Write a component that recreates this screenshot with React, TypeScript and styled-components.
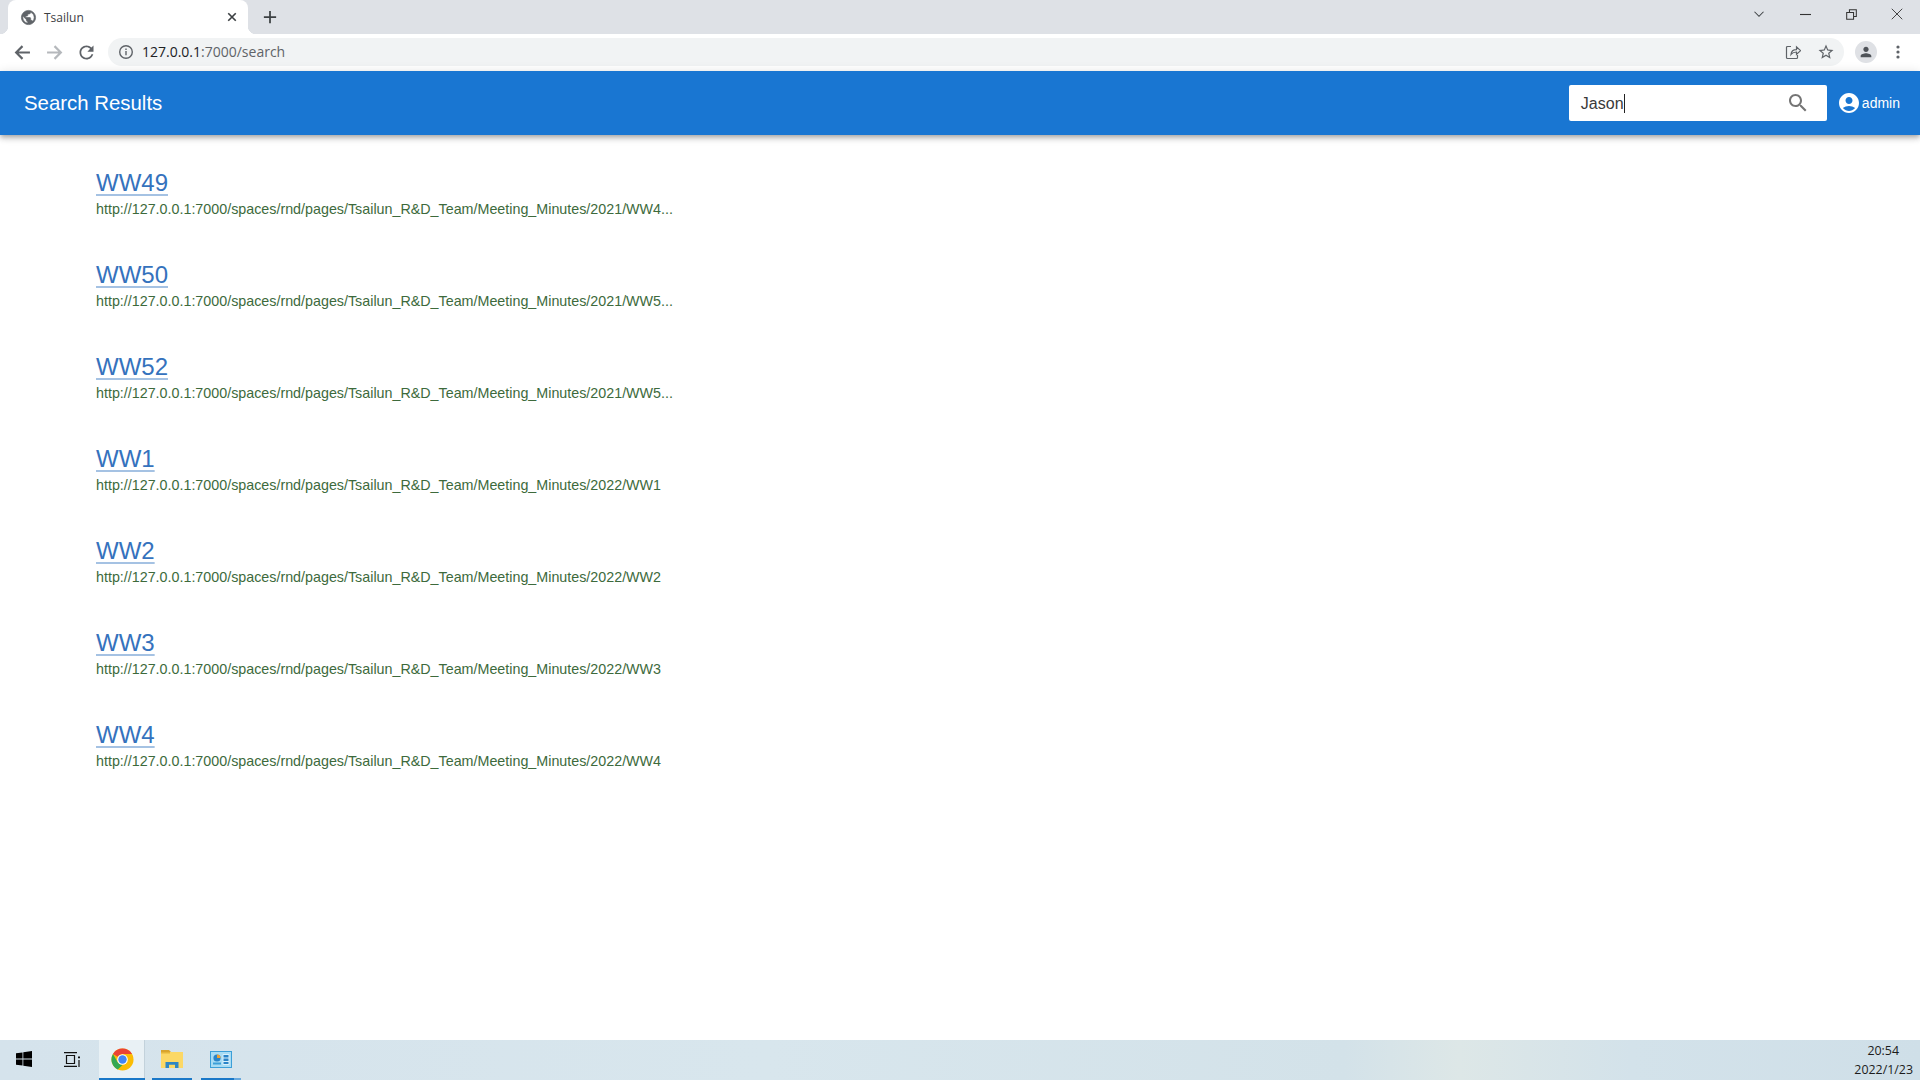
import React from "react"
import styled, { createGlobalStyle } from "styled-components"

const Global = createGlobalStyle`
    html, body, #root {
        margin: 0;
        padding: 0;
        height: 100%;
        background: #fff;
    }
    body {
        font-family: "Liberation Sans", Arial, sans-serif;
        overflow: hidden;
    }
`

const Shell = styled.div`
    width: 1920px;
    height: 1080px;
    display: flex;
    flex-direction: column;
    overflow: hidden;
`

const TabStrip = styled.div`
    height: 34px;
    flex: none;
    background: #dee1e6;
    display: flex;
    align-items: flex-end;
    padding-left: 8px;
`

const Tab = styled.div`
    position: relative;
    width: 240px;
    height: 34px;
    box-sizing: border-box;
    background: #fff;
    border-radius: 8px 8px 0 0;
    display: flex;
    align-items: center;
    padding: 0 10px 0 12px;
    gap: 7px;
    &::before,
    &::after {
        content: "";
        position: absolute;
        bottom: 0;
        width: 8px;
        height: 8px;
    }
    &::before {
        left: -8px;
        background: radial-gradient(circle at 0 0, #dee1e6 8px, #fff 8.5px);
    }
    &::after {
        right: -8px;
        background: radial-gradient(circle at 100% 0, #dee1e6 8px, #fff 8.5px);
    }
`

const TabTitle = styled.span`
    flex: 1;
    font-family: "Open Sans", sans-serif;
    font-size: 12px;
    color: #3c4043;
`

const NewTab = styled.div`
    width: 44px;
    height: 34px;
    display: flex;
    align-items: center;
    justify-content: center;
`

const WindowControls = styled.div`
    margin-left: auto;
    height: 34px;
    display: flex;
    align-items: center;
`

const WindowButton = styled.div`
    width: 46px;
    height: 28px;
    margin-bottom: 6px;
    display: flex;
    align-items: center;
    justify-content: center;
`

const Toolbar = styled.div`
    height: 37px;
    flex: none;
    box-sizing: border-box;
    background: #fff;
    display: flex;
    align-items: center;
    padding: 0 6px 1px 7px;
`

const NavButton = styled.div`
    width: 32px;
    height: 28px;
    display: flex;
    align-items: center;
    justify-content: center;
`

const Omnibox = styled.div`
    width: 1737px;
    height: 28px;
    margin-left: 5px;
    box-sizing: border-box;
    background: #f1f3f4;
    border-radius: 14px;
    display: flex;
    align-items: center;
    padding: 0 2px 0 10px;
`

const UrlText = styled.div`
    flex: 1;
    margin: 0 0 2px 8px;
    font-family: "Open Sans", sans-serif;
    font-size: 14px;
    color: #5f6368;
`

const UrlHost = styled.span`
    color: #202124;
`

const OmniAction = styled.div`
    width: 33px;
    height: 28px;
    display: flex;
    align-items: center;
    justify-content: center;
`

const Avatar = styled.div`
    width: 22px;
    height: 22px;
    margin-left: 11px;
    border-radius: 50%;
    background: #dfe1e5;
    display: flex;
    align-items: center;
    justify-content: center;
`

const MenuDots = styled.div`
    width: 32px;
    display: flex;
    align-items: center;
    justify-content: center;
    margin-left: 5px;
`

const AppBar = styled.header`
    height: 64px;
    flex: none;
    position: relative;
    z-index: 1;
    background: #1976d2;
    box-shadow: 0 2px 4px -1px rgba(0, 0, 0, 0.2), 0 4px 5px 0 rgba(0, 0, 0, 0.14), 0 1px 10px 0 rgba(0, 0, 0, 0.12);
    color: #fff;
    display: flex;
    align-items: center;
    padding: 0 20px 0 24px;
`

const AppTitle = styled.h1`
    margin: 0;
    font-size: 20.4px;
    font-weight: 400;
    flex: 1;
`

const SearchBox = styled.div`
    width: 258px;
    height: 36px;
    box-sizing: border-box;
    background: #fff;
    border-radius: 2px;
    display: flex;
    align-items: center;
    padding: 0 17px 0 12px;
    color: #3a3a3a;
    font-size: 16px;
`

const SearchValue = styled.span`
    flex: 1;
`

const Caret = styled.span`
    display: inline-block;
    width: 1px;
    height: 19px;
    background: #222;
    vertical-align: -4px;
`

const UserMenu = styled.div`
    margin-left: 10px;
    display: flex;
    align-items: center;
    gap: 1px;
    font-size: 14px;
`

const Results = styled.main`
    flex: 1;
    padding: 31px 0 0 96px;
`

const ResultItem = styled.div`
    height: 92px;
`

const ResultLink = styled.a`
    display: inline-block;
    font-size: 24px;
    line-height: 34px;
    color: #3572bd;
    text-decoration: underline;
    text-decoration-color: #a5c2e3;
    text-decoration-thickness: 2px;
    text-underline-offset: 3px;
`

const ResultUrl = styled.div`
    margin-top: -1px;
    font-size: 14.3px;
    line-height: 20px;
    color: #3d6a3c;
`

const Taskbar = styled.footer`
    height: 40px;
    flex: none;
    background: linear-gradient(90deg, #d5e3ec 0%, #d8e6ed 40%, #d3e2e9 70%, #dde7e7 76%, #d3e2ea 85%, #cfdfe8 100%);
    display: flex;
    align-items: stretch;
`

const TaskSlot = styled.div<{ $width: number; $state?: "active" | "open" | "tail" }>`
    width: ${(p) => p.$width}px;
    flex: none;
    box-sizing: border-box;
    display: flex;
    align-items: center;
    justify-content: center;
    background: ${(p) => (p.$state === "active" ? "#e9f1f5" : "transparent")};
    border-bottom: 2px solid ${(p) => (p.$state ? "#1a78c8" : "transparent")};
    ${(p) => (p.$state === "active" ? "box-shadow: inset -1px 0 0 #c3d2db;" : "")}
    ${(p) => (p.$state === "tail" ? "border-image: linear-gradient(90deg, #1a78c8 80%, #68a9de 80%) 1;" : "")}
`

const Clock = styled.div`
    margin-left: auto;
    padding-right: 7px;
    display: flex;
    flex-direction: column;
    align-items: flex-end;
    justify-content: center;
    font-family: "Open Sans", sans-serif;
    font-size: 12.4px;
    line-height: 19px;
    color: #1c1c1c;
`

const ClockTime = styled.span`
    padding-right: 14px;
`

const results = [
    { title: "WW49", url: "http://127.0.0.1:7000/spaces/rnd/pages/Tsailun_R&D_Team/Meeting_Minutes/2021/WW4..." },
    { title: "WW50", url: "http://127.0.0.1:7000/spaces/rnd/pages/Tsailun_R&D_Team/Meeting_Minutes/2021/WW5..." },
    { title: "WW52", url: "http://127.0.0.1:7000/spaces/rnd/pages/Tsailun_R&D_Team/Meeting_Minutes/2021/WW5..." },
    { title: "WW1", url: "http://127.0.0.1:7000/spaces/rnd/pages/Tsailun_R&D_Team/Meeting_Minutes/2022/WW1" },
    { title: "WW2", url: "http://127.0.0.1:7000/spaces/rnd/pages/Tsailun_R&D_Team/Meeting_Minutes/2022/WW2" },
    { title: "WW3", url: "http://127.0.0.1:7000/spaces/rnd/pages/Tsailun_R&D_Team/Meeting_Minutes/2022/WW3" },
    { title: "WW4", url: "http://127.0.0.1:7000/spaces/rnd/pages/Tsailun_R&D_Team/Meeting_Minutes/2022/WW4" },
]

const Globe = () => (
    <svg width="17" height="17" viewBox="0 0 24 24" fill="#5f6368" stroke="#5f6368" strokeWidth="0.9">
        <path d="M12 2C6.48 2 2 6.48 2 12s4.48 10 10 10 10-4.48 10-10S17.52 2 12 2zm-1 17.93c-3.95-.49-7-3.85-7-7.93 0-.62.08-1.21.21-1.79L9 15v1c0 1.1.9 2 2 2v1.93zm6.9-2.54c-.26-.81-1-1.39-1.9-1.39h-1v-3c0-.55-.45-1-1-1H8v-2h2c.55 0 1-.45 1-1V7h2c1.1 0 2-.9 2-2v-.41c2.93 1.19 5 4.06 5 7.41 0 2.08-.8 3.97-2.1 5.39z" />
    </svg>
)

const Line = ({ d, color = "#5f6368", size = 16, box = 16, width = 2 }: { d: string; color?: string; size?: number; box?: number; width?: number }) => (
    <svg width={size} height={size} viewBox={`0 0 ${box} ${box}`} fill="none" stroke={color} strokeWidth={width}>
        <path d={d} />
    </svg>
)

const ChromeLogo = () => (
    <svg width="23" height="23" viewBox="0 0 48 48">
        <circle cx="24" cy="24" r="23" fill="#fbbc04" />
        <path d="M24 1a23 23 0 0 1 19.9 11.5H24a11.5 11.5 0 0 0-10 5.8L4.1 12.5A23 23 0 0 1 24 1z" fill="#ea4335" />
        <path d="M4.1 12.5 14 29.8a11.5 11.5 0 0 0 10 5.7l-9.9 9.2A23 23 0 0 1 4.1 12.5z" fill="#34a853" />
        <circle cx="24" cy="24" r="11" fill="#fff" />
        <circle cx="24" cy="24" r="8.8" fill="#4285f4" />
    </svg>
)

const FolderIcon = () => (
    <svg width="22" height="20" viewBox="0 0 22 20">
        <path d="M0 1h8l2 2H0z" fill="#d9a52e" />
        <rect x="0" y="3" width="22" height="16" fill="#fcd866" />
        <rect x="0" y="3" width="9" height="1.5" fill="#e6b63a" />
        <path d="M4.500 19v-6h13v6h-3.500v-3.200h-6V19z" fill="#2f86c4" />
    </svg>
)

const PanelIcon = () => (
    <svg width="22" height="17" viewBox="0 0 22 17">
        <rect x="0.500" y="0.500" width="21" height="16" fill="#a8dcf4" stroke="#3c9fd8" />
        <circle cx="7" cy="7" r="3.600" fill="#2a84c8" />
        <path d="M7 7V3.400A3.600 3.600 0 0 1 10.600 7z" fill="#f0a030" />
        <rect x="3" y="11.500" width="8" height="2" fill="#3c9fd8" />
        <path d="M13 3.500h6v10h-6zM13 7h6M13 10.500h6" fill="#2a84c8" stroke="#d8f0fb" strokeWidth="1" />
    </svg>
)

export default function App() {
    return (
        <Shell>
            <Global />
            <TabStrip>
                <Tab>
                    <Globe />
                    <TabTitle>Tsailun</TabTitle>
                    <Line d="M3 3l10 10M13 3L3 13" color="#3c4043" size={12} width={2.2} />
                </Tab>
                <NewTab>
                    <Line d="M8 1v14M1 8h14" color="#3c4043" size={14} width={2} />
                </NewTab>
                <WindowControls>
                    <WindowButton>
                        <Line d="M2 5l6 6 6-6" color="#3c4043" size={12} width={1.4} />
                    </WindowButton>
                    <WindowButton>
                        <Line d="M0 8h16" color="#333" size={11} width={1.6} />
                    </WindowButton>
                    <WindowButton>
                        <Line d="M1 5h10v10H1zM5 5V1h10v10h-4" color="#333" size={11} width={1.5} />
                    </WindowButton>
                    <WindowButton>
                        <Line d="M1 1l14 14M15 1L1 15" color="#333" size={12} width={1.2} />
                    </WindowButton>
                </WindowControls>
            </TabStrip>
            <Toolbar>
                <NavButton>
                    <Line d="M15 8H2M8 2L2 8l6 6" size={17} />
                </NavButton>
                <NavButton>
                    <Line d="M1 8h13M8 2l6 6-6 6" color="#b5b8bc" size={17} />
                </NavButton>
                <NavButton>
                    <svg width="21" height="21" viewBox="0 0 24 24" fill="#5f6368">
                        <path d="M17.65 6.35C16.2 4.9 14.21 4 12 4c-4.42 0-7.99 3.58-7.99 8s3.57 8 7.99 8c3.73 0 6.84-2.55 7.73-6h-2.08c-.82 2.33-3.04 4-5.65 4-3.31 0-6-2.69-6-6s2.69-6 6-6c1.66 0 3.14.69 4.22 1.78L13 11h7V4l-2.35 2.350z" />
                    </svg>
                </NavButton>
                <Omnibox>
                    <svg width="16" height="16" viewBox="0 0 16 16" fill="none" stroke="#5f6368" strokeWidth="1.4">
                        <circle cx="8" cy="8" r="6.300" />
                        <path d="M8 7v4.200M8 4.400v1.500" />
                    </svg>
                    <UrlText>
                        <UrlHost>127.0.0.1</UrlHost>:7000/search
                    </UrlText>
                    <OmniAction>
                        <svg width="16" height="16" viewBox="0 0 16 16" fill="none" stroke="#5f6368" strokeWidth="1.2">
                            <path d="M6 2.500H2.500a1 1 0 0 0-1 1v10a1 1 0 0 0 1 1h9a1 1 0 0 0 1-1v-2.500" />
                            <path d="M6 10.500c.3-3 2.500-4.800 5.500-4.800V2.800l4 3.800-4 3.800V8c-2.300 0-4.200.8-5.500 2.500z" />
                        </svg>
                    </OmniAction>
                    <OmniAction>
                        <svg width="18" height="18" viewBox="0 0 24 24" fill="#5f6368">
                            <path d="M22 9.240l-7.190-.62L12 2 9.190 8.630 2 9.240l5.460 4.730L5.820 21 12 17.270 18.180 21l-1.630-7.030L22 9.240zM12 15.400l-3.760 2.270 1-4.280-3.320-2.880 4.380-.38L12 6.100l1.710 4.040 4.380.38-3.320 2.880 1 4.280L12 15.400z" />
                        </svg>
                    </OmniAction>
                </Omnibox>
                <Avatar>
                    <svg width="16" height="16" viewBox="0 0 24 24" fill="#4f5358">
                        <path d="M12 12c2.210 0 4-1.790 4-4s-1.790-4-4-4-4 1.790-4 4 1.790 4 4 4zm0 2c-2.670 0-8 1.340-8 4v2h16v-2c0-2.660-5.330-4-8-4z" />
                    </svg>
                </Avatar>
                <MenuDots>
                    <svg width="4" height="14" viewBox="0 0 4 14" fill="#5f6368">
                        <circle cx="2" cy="2" r="1.600" />
                        <circle cx="2" cy="7" r="1.600" />
                        <circle cx="2" cy="12" r="1.600" />
                    </svg>
                </MenuDots>
            </Toolbar>
            <AppBar>
                <AppTitle>Search Results</AppTitle>
                <SearchBox>
                    <SearchValue>
                        Jason
                        <Caret />
                    </SearchValue>
                    <svg width="24" height="24" viewBox="0 0 24 24" fill="#757575">
                        <path d="M15.500 14h-.79l-.28-.27C15.410 12.590 16 11.110 16 9.500 16 5.910 13.090 3 9.500 3S3 5.910 3 9.500 5.910 16 9.500 16c1.610 0 3.090-.59 4.230-1.570l.27.28v.79l5 4.990L20.490 19l-4.990-5zm-6 0C7.010 14 5 11.990 5 9.500S7.010 5 9.500 5 14 7.010 14 9.500 11.990 14 9.500 14z" />
                    </svg>
                </SearchBox>
                <UserMenu>
                    <svg width="24" height="24" viewBox="0 0 24 24" fill="#fff">
                        <path d="M12 2C6.480 2 2 6.480 2 12s4.480 10 10 10 10-4.480 10-10S17.520 2 12 2zm0 4c1.930 0 3.500 1.570 3.500 3.500S13.930 13 12 13s-3.500-1.570-3.500-3.500S10.070 6 12 6zm0 14c-2.030 0-4.430-.82-6.140-2.880C7.550 15.800 9.680 15 12 15s4.450.8 6.140 2.120C16.430 19.180 14.030 20 12 20z" />
                    </svg>
                    admin
                </UserMenu>
            </AppBar>
            <Results>
                {results.map((r) => (
                    <ResultItem key={r.title}>
                        <ResultLink href="#">{r.title}</ResultLink>
                        <ResultUrl>{r.url}</ResultUrl>
                    </ResultItem>
                ))}
            </Results>
            <Taskbar>
                <TaskSlot $width={48}>
                    <svg width="16" height="16" viewBox="0 0 16 16" fill="#000">
                        <path d="M0 2.300l6.500-.9v6.200H0zM7.300 1.300L16 0v7.600H7.300zM0 8.400h6.500v6.200L0 13.700zM7.300 8.400H16V16l-8.700-1.300z" />
                    </svg>
                </TaskSlot>
                <TaskSlot $width={51}>
                    <svg width="19" height="15" viewBox="0 0 19 15" fill="none" stroke="#111" strokeWidth="1.200">
                        <path d="M0 .6h13M0 14.400h13M2.500 3.500h8v8h-8z" />
                        <path d="M15 4.500v1.800" strokeWidth="2" />
                        <path d="M15 8v7" />
                    </svg>
                </TaskSlot>
                <TaskSlot $width={46} $state="active">
                    <ChromeLogo />
                </TaskSlot>
                <TaskSlot $width={7} />
                <TaskSlot $width={40} $state="open">
                    <FolderIcon />
                </TaskSlot>
                <TaskSlot $width={9} />
                <TaskSlot $width={40} $state="tail">
                    <PanelIcon />
                </TaskSlot>
                <Clock>
                    <ClockTime>20:54</ClockTime>
                    <span>2022/1/23</span>
                </Clock>
            </Taskbar>
        </Shell>
    )
}
